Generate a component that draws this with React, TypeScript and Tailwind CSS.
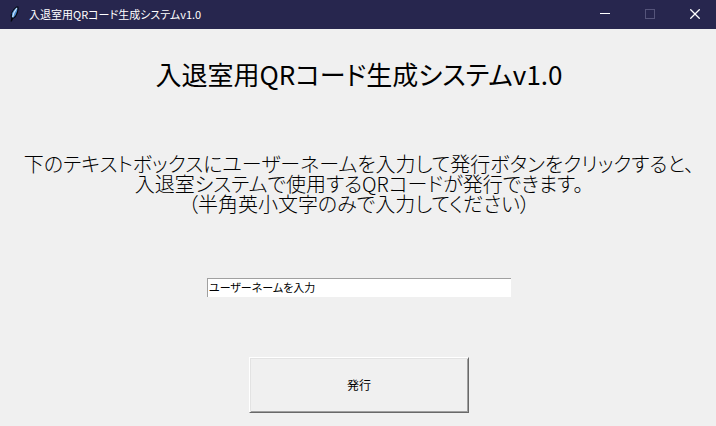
import { useState } from "react";

function FeatherIcon() {
  return (
    <svg className="h-4 w-4" viewBox="0 0 16 16" aria-hidden="true">
      <path d="M3.6 15.6 L4.2 12.5 L3.6 10 L4.4 6.5 L6.4 3.2 L9.4 0.6 L11.4 0.4 L11.6 3 L10.8 7 L8.8 11 L6 13 L4.8 15.6 Z" fill="#05070f" />
      <path d="M4.8 11.5 L5 7.2 L7 4 L9.4 1.8 L10.4 1.6 L10.2 5 L8.6 9 L6.6 11.6 Z" fill="#4b8bd0" />
      <path d="M9.8 2 L7 6.6 L5.6 11" stroke="#cfe6fb" strokeWidth="1.1" fill="none" />
    </svg>
  );
}

function TitleBar() {
  return (
    <header className="flex h-[29px] items-center bg-[#27264e] pr-[6px] pb-[2px] pl-[7px] text-white">
      <FeatherIcon />
      <span className="ml-1.5 flex-1 truncate text-[11px] leading-4">入退室用QRコード生成システムv1.0</span>
      <div className="flex h-full gap-[15px]">
        <button type="button" aria-label="最小化" className="flex w-[30px] items-center justify-center">
          <svg className="h-[10px] w-[10px]" viewBox="0 0 10 10" shapeRendering="crispEdges">
            <path d="M0 4h10v1H0z" fill="#ffffff" />
          </svg>
        </button>
        <button type="button" aria-label="最大化" disabled className="flex w-[30px] items-center justify-center">
          <svg className="h-[10px] w-[10px]" viewBox="0 0 10 10" shapeRendering="crispEdges">
            <path d="M0 0h10v10H0zM1 1v8h8V1z" fillRule="evenodd" fill="#55547a" />
          </svg>
        </button>
        <button type="button" aria-label="閉じる" className="flex w-[30px] items-center justify-center">
          <svg className="h-[10px] w-[10px]" viewBox="0 0 10 10">
            <path d="M0.3 0.3l9.4 9.4M9.7 0.3L0.3 9.7" stroke="#ffffff" strokeWidth="1.3" />
          </svg>
        </button>
      </div>
    </header>
  );
}

export default function App() {
  const [name, setName] = useState("ユーザーネームを入力");

  return (
    <div className="min-h-screen bg-[#f0f0f0] font-['Noto_Sans_CJK_JP',sans-serif] text-black [font-feature-settings:'palt']">
      <TitleBar />
      <main className="flex flex-col items-center pt-7 pl-[2px]">
        <h1 className="text-[26px] leading-[34px] font-normal">入退室用QRコード生成システムv1.0</h1>
        <label htmlFor="username" className="mt-[63px] text-center text-[20px] leading-5 font-light whitespace-nowrap">
          下のテキストボックスにユーザーネームを入力して発行ボタンをクリックすると、
          <br />
          入退室システムで使用するQRコードが発行できます。
          <br />
          （半角英小文字のみで入力してください）
        </label>
        <input
          id="username"
          type="text"
          value={name}
          onChange={(e) => setName(e.target.value)}
          className="mt-16 h-[19px] w-[304px] border-t border-l border-[#a0a0a0] bg-white px-px pb-[2px] text-[11px] leading-4 outline-none"
        />
        <button
          type="button"
          className="mt-[60px] h-14 w-[220px] border border-t-white border-r-[#696969] border-b-[#696969] border-l-white text-[12px] leading-4 shadow-[inset_1px_1px_0_#e3e3e3,inset_-1px_-1px_0_#a0a0a0]"
        >
          発行
        </button>
      </main>
    </div>
  );
}
